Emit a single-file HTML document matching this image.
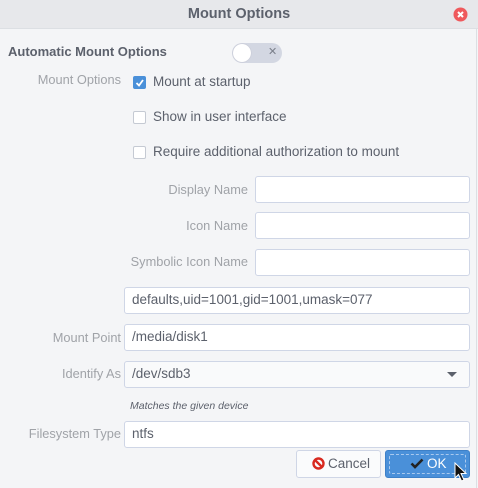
<html><head><style>
body{margin:0;width:478px;height:488px;background:#f4f5f7;font-family:"Liberation Sans","DejaVu Sans",sans-serif;font-size:13.5px;color:#5c616c;position:relative;overflow:hidden}
.a{position:absolute}
.lbl{position:absolute;color:#a0a3a8;text-align:right;line-height:16px;font-size:12.8px}
.e{position:absolute;background:#fff;border:1px solid #cfd6e6;border-radius:3px;box-sizing:border-box;padding-left:7px;line-height:24px;color:#5c616c}
.cb{position:absolute;width:13px;height:13px;border:1px solid #c5cad3;background:#fff;border-radius:2px;box-sizing:border-box}
.t{position:absolute;line-height:16px}
</style></head><body>
<div class="a" style="left:0;top:0;width:478px;height:28px;background:#e7e8eb;border-bottom:1px solid #dcdfe3"></div>
<div class="a" style="left:0;top:6px;width:478px;text-align:center;font-weight:bold;font-size:14.5px;color:#5c616c">Mount Options</div>
<svg class="a" style="left:453px;top:7px" width="15" height="15"><circle cx="7.5" cy="7.5" r="7" fill="#ef5a5d"/><path d="M5 5L10 10M10 5L5 10" stroke="#fff" stroke-width="2"/></svg>
<div class="a" style="right:1px;top:28px;width:1px;height:460px;background:#dcdfe3"></div>
<div class="t" style="left:8px;top:44px;font-weight:bold;font-size:13px">Automatic Mount Options</div>
<div class="a" style="left:232px;top:43px;width:50px;height:20px;border-radius:10px;background:#d3d7e2"></div>
<div class="a" style="left:233px;top:44px;width:18px;height:18px;border-radius:9px;background:#fff;box-shadow:0 0 1px #aab"></div>
<div class="a" style="left:268px;top:45px;font-size:11px;color:#7a7f8a">✕</div>
<div class="lbl" style="left:0;width:121px;top:72px">Mount Options</div>
<div class="cb" style="left:133px;top:76px;background:#4a90d9;border-color:#4a90d9"><svg width="11" height="11" style="position:absolute;left:0;top:0"><path d="M2.5 6L5 8.5L9 3" stroke="#fff" stroke-width="1.8" fill="none"/></svg></div>
<div class="t" style="left:153px;top:74px">Mount at startup</div>
<div class="cb" style="left:133px;top:111px"></div>
<div class="t" style="left:153px;top:109px">Show in user interface</div>
<div class="cb" style="left:133px;top:146px"></div>
<div class="t" style="left:153px;top:144px">Require additional authorization to mount</div>
<div class="lbl" style="left:0;width:248px;top:182px">Display Name</div>
<div class="e" style="left:255px;top:176px;width:215px;height:27px"></div>
<div class="lbl" style="left:0;width:248px;top:218px">Icon Name</div>
<div class="e" style="left:255px;top:212px;width:215px;height:27px"></div>
<div class="lbl" style="left:0;width:248px;top:254px">Symbolic Icon Name</div>
<div class="e" style="left:255px;top:249px;width:215px;height:27px"></div>
<div class="e" style="left:124px;top:287px;width:346px;height:27px">defaults,uid=1001,gid=1001,umask=077</div>
<div class="lbl" style="left:0;width:121px;top:330px">Mount Point</div>
<div class="e" style="left:124px;top:324px;width:346px;height:27px">/media/disk1</div>
<div class="lbl" style="left:0;width:121px;top:366px">Identify As</div>
<div class="e" style="left:124px;top:361px;width:346px;height:27px;background:#f9fafb">/dev/sdb3</div>
<svg class="a" style="left:446px;top:371px" width="12" height="8"><path d="M1 1L11 1L6 6Z" fill="#5c616c"/></svg>
<div class="t" style="left:130px;top:398px;font-size:10.5px;font-style:italic">Matches the given device</div>
<div class="lbl" style="left:0;width:121px;top:426px">Filesystem Type</div>
<div class="e" style="left:124px;top:421px;width:346px;height:27px">ntfs</div>
<div class="a" style="left:296px;top:450px;width:85px;height:28px;border:1px solid #cfd6e6;border-radius:3px;background:#fafbfc;box-sizing:border-box"></div>
<svg class="a" style="left:312px;top:457px" width="13" height="13"><circle cx="6.5" cy="6.5" r="5" fill="none" stroke="#d8291f" stroke-width="2.4"/><path d="M3 3L10 10" stroke="#d8291f" stroke-width="2.4"/></svg>
<div class="t" style="left:328px;top:456px">Cancel</div>
<div class="a" style="left:385px;top:450px;width:85px;height:28px;border:1px solid #3d80c8;border-radius:3px;background:#4a90d9;box-sizing:border-box"></div>
<div class="a" style="left:389px;top:454px;width:75px;height:18px;border:1px dashed #a9c9ee;border-radius:2px"></div>
<svg class="a" style="left:410px;top:458px" width="14" height="11"><path d="M1.5 5.5L5 9L12.5 1.5" stroke="#222" stroke-width="2.6" fill="none"/></svg>
<div class="t" style="left:427px;top:456px;color:#fff">OK</div>
<svg class="a" style="left:454px;top:462px" width="14" height="22"><path d="M1 1L1 16L4.5 12.5L7.5 19L10 18L7 11.5L12 11.5Z" fill="#111" stroke="#fff" stroke-width="1"/></svg>
</body></html>
